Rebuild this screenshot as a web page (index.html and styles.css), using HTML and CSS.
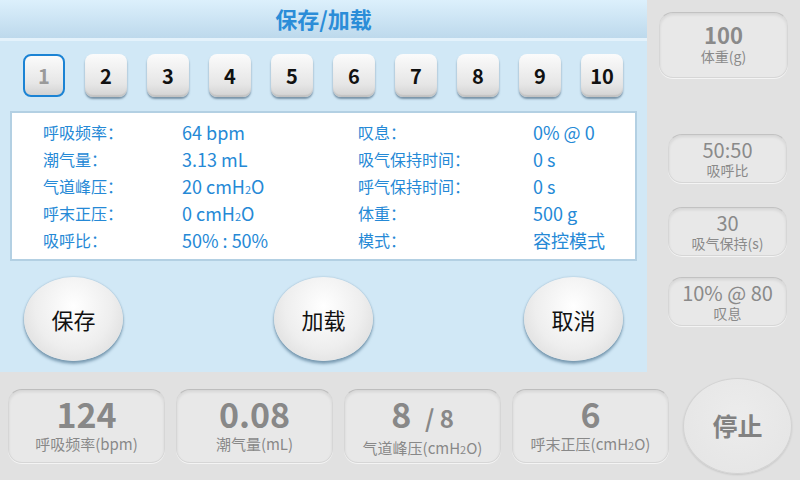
FILE: index.html
```html
<!DOCTYPE html>
<html lang="zh">
<head>
    <meta charset="UTF-8">
    <meta name="viewport" content="width=device-width, initial-scale=1.0">
    <title>保存/加载</title>
    <link rel="stylesheet" href="styles.css">
</head>
<body>
    <div class="screen">
        <div class="top">
            <section class="dialog">
                <div class="dialog-title">保存/加载</div>

                <div class="slots">
                    <button class="slot active">1</button>
                    <button class="slot">2</button>
                    <button class="slot">3</button>
                    <button class="slot">4</button>
                    <button class="slot">5</button>
                    <button class="slot">6</button>
                    <button class="slot">7</button>
                    <button class="slot">8</button>
                    <button class="slot">9</button>
                    <button class="slot">10</button>
                </div>

                <div class="summary">
                    <span class="key">呼吸频率：</span><span class="val">64 bpm</span>
                    <span class="key">叹息：</span><span class="val">0% @ 0</span>
                    <span class="key">潮气量：</span><span class="val">3.13 mL</span>
                    <span class="key">吸气保持时间：</span><span class="val">0 s</span>
                    <span class="key">气道峰压：</span><span class="val">20 cmH<small class="sub">2</small>O</span>
                    <span class="key">呼气保持时间：</span><span class="val">0 s</span>
                    <span class="key">呼末正压：</span><span class="val">0 cmH<small class="sub">2</small>O</span>
                    <span class="key">体重：</span><span class="val">500 g</span>
                    <span class="key">吸呼比：</span><span class="val">50% : 50%</span>
                    <span class="key">模式：</span><span class="val">容控模式</span>
                </div>

                <div class="actions">
                    <button class="round">保存</button>
                    <button class="round">加载</button>
                    <button class="round">取消</button>
                </div>
            </section>

            <aside class="side">
                <div class="setting weight">
                    <div class="setting-value">100</div>
                    <div class="setting-label">体重(g)</div>
                </div>
                <div class="setting ratio">
                    <div class="setting-value">50:50</div>
                    <div class="setting-label">吸呼比</div>
                </div>
                <div class="setting hold">
                    <div class="setting-value">30</div>
                    <div class="setting-label">吸气保持(s)</div>
                </div>
                <div class="setting sigh">
                    <div class="setting-value">10% @ 80</div>
                    <div class="setting-label">叹息</div>
                </div>
            </aside>
        </div>

        <div class="readouts">
            <div class="card">
                <div class="card-value">124</div>
                <div class="card-label">呼吸频率(bpm)</div>
            </div>
            <div class="card">
                <div class="card-value">0.08</div>
                <div class="card-label">潮气量(mL)</div>
            </div>
            <div class="card">
                <div class="card-value">8 <span class="card-limit">/ 8</span></div>
                <div class="card-label">气道峰压(cmH<small class="sub">2</small>O)</div>
            </div>
            <div class="card">
                <div class="card-value">6</div>
                <div class="card-label">呼末正压(cmH<small class="sub">2</small>O)</div>
            </div>
            <button class="stop">停止</button>
        </div>
    </div>
</body>
</html>
```

FILE: styles.css
```css
body {
    margin: 0;
    padding: 0;
    font-family: "Noto Sans CJK SC", "Noto Sans", sans-serif;
    background-color: #e1e1e1;
}
button {
    font-family: inherit;
    cursor: pointer;
}
.screen {
    width: 800px;
    height: 480px;
    display: flex;
    flex-direction: column;
    overflow: hidden;
}
.top {
    display: flex;
    height: 372px;
}

/* dialog */
.dialog {
    width: 647px;
    background-color: #d1e8f6;
    display: flex;
    flex-direction: column;
}
.dialog-title {
    height: 38px;
    line-height: 36px;
    text-align: center;
    font-size: 22px;
    font-weight: bold;
    color: #2b8dd8;
    background: linear-gradient(#dcf0fc, #bdd9ec);
    border-bottom: 3px solid #e4f2fb;
}
.slots {
    display: flex;
    gap: 20px;
    padding-left: 23px;
    margin-top: 13px;
}
.slot {
    width: 42px;
    height: 43px;
    padding: 0;
    border: none;
    border-radius: 8px;
    background: linear-gradient(#fbfbfb, #e6e6e6 70%, #d2d2d2);
    box-shadow: 0 2px 2px rgba(60, 90, 115, 0.6), inset 0 -2px 1px rgba(0, 0, 0, 0.08);
    font-size: 20px;
    font-weight: bold;
    color: #111;
}
.slot.active {
    border: 2px solid #1b83d4;
    color: #9a9a9a;
    box-shadow: none;
}
.summary {
    margin: 14px 10px 0;
    height: 150px;
    box-sizing: border-box;
    padding: 5px 0 0 31px;
    background-color: #fff;
    border: 2px solid #b3d0e3;
    display: grid;
    grid-template-columns: 139px 176px 175px 1fr;
    grid-auto-rows: 27px;
    align-items: center;
    color: #2589d6;
}
.key {
    font-size: 16px;
}
.val {
    font-size: 18px;
}
.sub {
    font-size: 11px;
}
.actions {
    display: flex;
    justify-content: space-between;
    padding: 0 24px;
    margin-top: 16px;
}
.round {
    width: 99px;
    height: 84px;
    border: none;
    border-radius: 50%;
    background: radial-gradient(ellipse at 50% 35%, #ffffff, #eeeeee 55%, #d6d6d6);
    box-shadow: 0 3px 3px rgba(60, 100, 130, 0.55), 0 0 2px rgba(60, 100, 130, 0.4);
    font-size: 22px;
    color: #111;
}

/* right column */
.side {
    flex: 1;
    display: flex;
    flex-direction: column;
    padding-top: 12px;
}
.setting {
    box-sizing: border-box;
    border-radius: 14px;
    background-color: #e8e8e8;
    border: 1px solid #d6d6d6;
    border-top-color: #c2c2c2;
    box-shadow: inset 0 2px 3px rgba(0, 0, 0, 0.08), 0 1px 0 #f4f4f4;
    display: flex;
    flex-direction: column;
    align-items: center;
    justify-content: center;
    color: #8a8a8a;
}
.setting-value {
    font-size: 20px;
    line-height: 22px;
}
.setting-label {
    font-size: 14px;
    line-height: 18px;
}
.weight {
    margin-left: 12px;
    width: 129px;
    height: 66px;
}
.weight .setting-value {
    font-weight: bold;
    font-size: 22px;
    line-height: 25px;
    margin-top: -4px;
}
.ratio,
.hold,
.sigh {
    margin-left: 21px;
    width: 119px;
    height: 49px;
}
.ratio {
    margin-top: 56px;
}
.hold {
    margin-top: 24px;
}
.sigh {
    margin-top: 21px;
}

/* bottom readouts */
.readouts {
    flex: 1;
    display: flex;
    align-items: center;
    gap: 11px;
    padding-left: 8px;
}
.card {
    width: 157px;
    height: 74px;
    box-sizing: border-box;
    border-radius: 14px;
    background-color: #e8e8e8;
    border: 1px solid #d6d6d6;
    border-top-color: #bdbdbd;
    box-shadow: inset 0 2px 3px rgba(0, 0, 0, 0.08), 0 1px 0 #f4f4f4;
    display: flex;
    flex-direction: column;
    align-items: center;
    color: #888;
}
.card-value {
    font-size: 34px;
    font-weight: bold;
    line-height: 40px;
    margin-top: 4px;
}
.card-limit {
    font-size: 24px;
    margin-left: 6px;
}
.card-label {
    font-size: 15px;
    line-height: 20px;
}
.stop {
    margin-left: 3px;
    width: 109px;
    height: 96px;
    border: 1px solid #d2d2d2;
    border-radius: 50%;
    background: radial-gradient(ellipse at 50% 40%, #ececec, #e4e4e4);
    box-shadow: 0 1px 2px rgba(0, 0, 0, 0.12);
    font-size: 25px;
    font-weight: bold;
    color: #828282;
    padding-bottom: 4px;
}
```
